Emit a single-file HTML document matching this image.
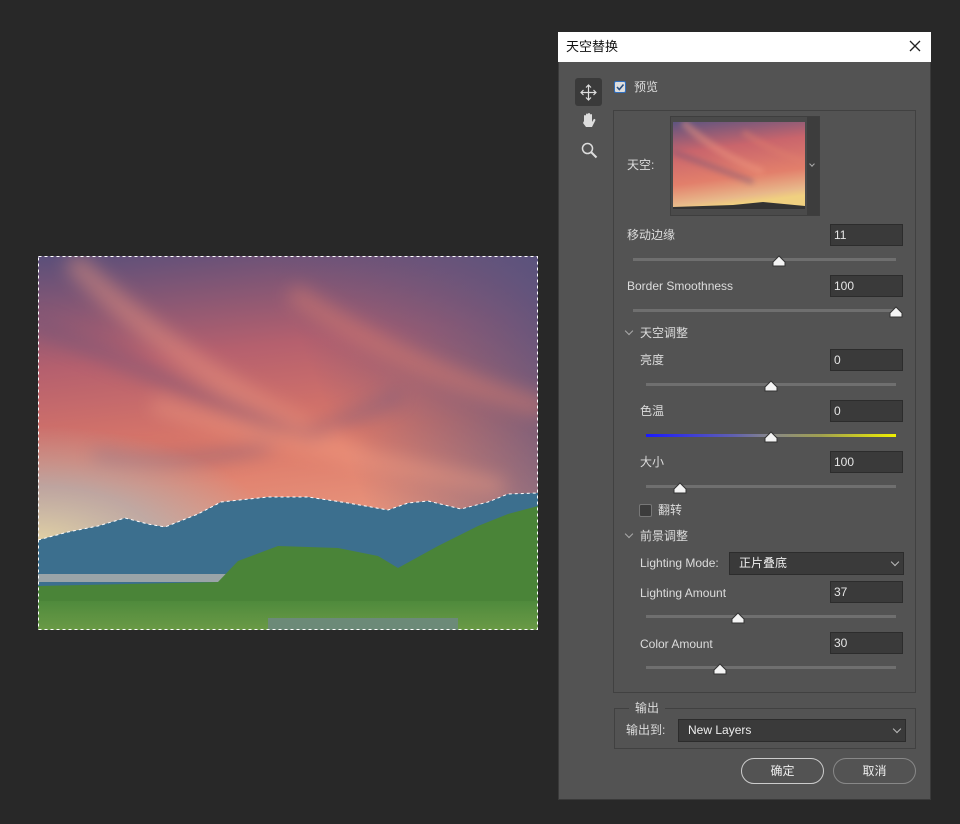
<!DOCTYPE html><html><head><meta charset="utf-8"><style>
*{margin:0;padding:0;box-sizing:border-box}
body{width:960px;height:824px;background:#282828;position:relative;overflow:hidden;font-family:"Liberation Sans","Noto Sans CJK SC",sans-serif;font-size:12px;color:#dcdcdc}
.a{position:absolute}
.t{position:absolute;line-height:14px;white-space:nowrap}
.in{position:absolute;width:73px;height:22px;background:#3a3a3a;border:1px solid #2c2c2c;padding:4px 0 0 3px;line-height:13px;color:#e6e6e6}
.tr{position:absolute;height:3px;background:#6f6f6f}
.sel{position:absolute;height:23px;background:#3a3a3a;border:1px solid #2c2c2c;padding:4px 0 0 9px;line-height:13px;color:#eee}
.sel:after{content:"";position:absolute;right:5px;top:6px;width:5px;height:5px;border-right:1px solid #bbb;border-bottom:1px solid #bbb;transform:rotate(45deg)}
.chev{position:absolute;width:6px;height:6px;border-right:1px solid #aaa;border-bottom:1px solid #aaa;transform:rotate(45deg)}
.btn{position:absolute;height:26px;border:1px solid #aaa;border-radius:13px;text-align:center;line-height:24px;color:#eee}
</style></head><body>
<svg class="a" style="left:38px;top:256px" width="500" height="374" viewBox="0 0 500 374">
<defs>
<linearGradient id="sk" x1="0" y1="0" x2="0.15" y2="1">
<stop offset="0" stop-color="#5a4f7a"/><stop offset="0.3" stop-color="#b5606e"/><stop offset="0.55" stop-color="#dc7868"/><stop offset="0.78" stop-color="#e8947c"/><stop offset="1" stop-color="#d0b898"/></linearGradient>
<linearGradient id="sk2" x1="1" y1="0" x2="0" y2="0.3"><stop offset="0" stop-color="#56527e" stop-opacity=".9"/><stop offset="0.5" stop-color="#56527e" stop-opacity="0"/></linearGradient>
<radialGradient id="lf" cx="0" cy="1" r="1"><stop offset="0" stop-color="#e6dca8" stop-opacity=".9"/><stop offset=".5" stop-color="#a8bcc0" stop-opacity=".6"/><stop offset="1" stop-color="#a8bcc0" stop-opacity="0"/></radialGradient>
<linearGradient id="gr" x1="0" y1="0" x2="0" y2="1"><stop offset="0" stop-color="#4f8a3c"/><stop offset="1" stop-color="#6a9a46"/></linearGradient>
<filter id="bl"><feGaussianBlur stdDeviation="9"/></filter>
</defs>
<rect width="500" height="374" fill="url(#sk)"/>
<rect width="500" height="374" fill="url(#sk2)"/>
<g fill="none" stroke-linecap="round" opacity=".45" filter="url(#bl)">
<path d="M40 10 Q150 120 320 200" stroke="#f19a80" stroke-width="22"/>
<path d="M0 70 Q120 120 260 180" stroke="#6e5278" stroke-width="16"/>
<path d="M60 200 Q200 220 360 140" stroke="#6e5a80" stroke-width="12"/>
<path d="M260 40 Q360 110 500 150" stroke="#e0806e" stroke-width="20"/>
<path d="M120 150 Q250 190 460 230" stroke="#f6a285" stroke-width="14"/>
</g>
<rect x="0" y="170" width="240" height="120" fill="url(#lf)"/>
<path d="M0 284 L30 276 L60 270 L87 262 L110 268 L127 271 L160 258 L183 246 L230 241 L270 241 L310 247 L350 254 L370 247 L390 245 L423 253 L450 246 L470 238 L500 237 L500 374 L0 374Z" fill="#3c6f8e"/>
<rect x="0" y="318" width="190" height="8" fill="#9aa4a8"/>
<path d="M0 330 L180 326 L200 305 L240 290 L300 292 L340 300 L360 312 L400 290 L440 270 L470 258 L500 250 L500 374 L0 374Z" fill="#4a8438"/>
<path d="M0 345 L500 345 L500 374 L0 374Z" fill="url(#gr)"/>
<rect x="230" y="362" width="190" height="12" fill="#6c8a78"/>
<rect x="0.5" y="0.5" width="499" height="373" fill="none" stroke="#fff" stroke-dasharray="3 3"/>
<path d="M0 284 L30 276 L60 270 L87 262 L110 268 L127 271 L160 258 L183 246 L230 241 L270 241 L310 247 L350 254 L370 247 L390 245 L423 253 L450 246 L470 238 L500 237" fill="none" stroke="#fff" stroke-dasharray="3 3"/>
</svg>

<div class="a" style="left:558px;top:32px;width:373px;height:768px;background:#535353;border:1px solid #3a3a3a"></div>
<div class="a" style="left:558px;top:32px;width:373px;height:30px;background:#fff"></div>
<div class="t" style="left:566px;top:40px;color:#111;font-size:13px">天空替换</div>
<svg class="a" style="left:909px;top:40px" width="12" height="12"><path d="M1 1L11 11M11 1L1 11" stroke="#222" stroke-width="1.3"/></svg>

<div class="a" style="left:575px;top:78px;width:27px;height:28px;background:#3a3a3a;border-radius:3px"></div>
<svg class="a" style="left:580px;top:84px" width="17" height="17" viewBox="0 0 17 17" fill="none" stroke="#ddd" stroke-width="1.2"><path d="M8.5 1V16M1 8.5H16M6 3.5L8.5 1L11 3.5M6 13.5L8.5 16L11 13.5M3.5 6L1 8.5L3.5 11M13.5 6L16 8.5L13.5 11"/></svg>
<svg class="a" style="left:581px;top:112px" width="16" height="18" viewBox="0 0 16 18"><path d="M3 9V4a1 1 0 0 1 2 0V8V2.5a1 1 0 0 1 2 0V8V2a1 1 0 0 1 2 0V8V3a1 1 0 0 1 2 0V10L12.5 7.5a1 1 0 0 1 1.8 1L11 15H5L2 11Z" fill="#ddd"/></svg>
<svg class="a" style="left:581px;top:142px" width="17" height="17" viewBox="0 0 17 17" fill="none" stroke="#ddd" stroke-width="1.5"><circle cx="6.5" cy="6.5" r="5"/><path d="M10 10L15.5 15.5" stroke-width="2"/></svg>

<div class="a" style="left:614px;top:81px;width:12px;height:12px;background:#ddd;border:1px solid #2f6fc0;border-radius:2px"></div>
<svg class="a" style="left:615px;top:82px" width="10" height="10"><path d="M2 5L4.3 7.5L8.5 2.5" stroke="#2a4f80" stroke-width="1.6" fill="none"/></svg>
<div class="t" style="left:634px;top:80px">预览</div>

<div class="a" style="left:613px;top:110px;width:303px;height:583px;border:1px solid #414141"></div>

<div class="t" style="left:627px;top:158px">天空:</div>
<div class="a" style="left:670px;top:116px;width:150px;height:100px;border:1px solid #3e3e3e;background:#4a4a4a"></div>
<svg class="a" style="left:673px;top:122px" width="132" height="87" viewBox="0 0 132 87">
<defs><linearGradient id="tg" x1="0" y1="0" x2="0.2" y2="1"><stop offset="0" stop-color="#5e5480"/><stop offset=".35" stop-color="#c9656c"/><stop offset=".7" stop-color="#e27f6b"/><stop offset=".92" stop-color="#e8b88a"/><stop offset="1" stop-color="#f0d080"/></linearGradient><filter id="b2"><feGaussianBlur stdDeviation="3"/></filter></defs>
<rect width="132" height="87" fill="url(#tg)"/>
<g fill="none" opacity=".45" filter="url(#b2)"><path d="M10 0 Q40 30 90 50" stroke="#f19a80" stroke-width="7"/><path d="M0 30 Q40 45 80 60" stroke="#6e5278" stroke-width="5"/><path d="M70 10 Q100 30 132 40" stroke="#e0806e" stroke-width="6"/></g>
<path d="M0 85 L60 83 L90 80 L132 84 L132 87 L0 87Z" fill="#333"/></svg>
<div class="a" style="left:807px;top:117px;width:12px;height:98px;background:#3d3d3d"></div>
<div class="chev" style="left:810px;top:162px;width:4px;height:4px"></div>

<div class="t" style="left:627px;top:228px">移动边缘</div>
<div class="in" style="left:830px;top:224px">11</div>
<div class="tr" style="left:633px;top:258px;width:263px"></div>
<div class="t" style="left:627px;top:279px">Border Smoothness</div>
<div class="in" style="left:830px;top:275px">100</div>
<div class="tr" style="left:633px;top:309px;width:263px"></div>

<div class="chev" style="left:626px;top:328px"></div>
<div class="t" style="left:640px;top:326px">天空调整</div>
<div class="t" style="left:640px;top:353px">亮度</div>
<div class="in" style="left:830px;top:349px">0</div>
<div class="tr" style="left:646px;top:383px;width:250px"></div>
<div class="t" style="left:640px;top:404px">色温</div>
<div class="in" style="left:830px;top:400px">0</div>
<div class="tr" style="left:646px;top:434px;width:250px;background:linear-gradient(90deg,#1a1aff,#6060b0 35%,#888 50%,#a0a050 70%,#f0f000)"></div>
<div class="t" style="left:640px;top:455px">大小</div>
<div class="in" style="left:830px;top:451px">100</div>
<div class="tr" style="left:646px;top:485px;width:250px"></div>
<div class="a" style="left:639px;top:504px;width:13px;height:13px;background:#3c3c3c;border:1px solid #777;border-radius:2px"></div>
<div class="t" style="left:658px;top:503px">翻转</div>

<div class="chev" style="left:626px;top:531px"></div>
<div class="t" style="left:640px;top:529px">前景调整</div>
<div class="t" style="left:640px;top:556px">Lighting Mode:</div>
<div class="sel" style="left:729px;top:552px;width:175px">正片叠底</div>
<div class="t" style="left:640px;top:586px">Lighting Amount</div>
<div class="in" style="left:830px;top:581px">37</div>
<div class="tr" style="left:646px;top:615px;width:250px"></div>
<div class="t" style="left:640px;top:637px">Color Amount</div>
<div class="in" style="left:830px;top:632px">30</div>
<div class="tr" style="left:646px;top:666px;width:250px"></div>

<div class="a" style="left:614px;top:708px;width:302px;height:41px;border:1px solid #414141"></div>
<div class="t" style="left:629px;top:701px;background:#535353;padding:0 6px">输出</div>
<div class="t" style="left:626px;top:723px">输出到:</div>
<div class="sel" style="left:678px;top:719px;width:228px">New Layers</div>

<div class="btn" style="left:741px;top:758px;width:83px;border-color:#ccc">确定</div>
<div class="btn" style="left:833px;top:758px;width:83px;border-color:#888">取消</div>

<svg class="a" style="left:0;top:0" width="960" height="824">
<defs><path id="k" d="M-6 5V1L0 -5L6 1V5Z" fill="#f4f4f4" stroke="#333" stroke-width="1"/></defs>
<use href="#k" x="779" y="261"/><use href="#k" x="896" y="312"/><use href="#k" x="771" y="386"/><use href="#k" x="771" y="437"/><use href="#k" x="680" y="488"/><use href="#k" x="738" y="618"/><use href="#k" x="720" y="669"/>
</svg>
</body></html>
